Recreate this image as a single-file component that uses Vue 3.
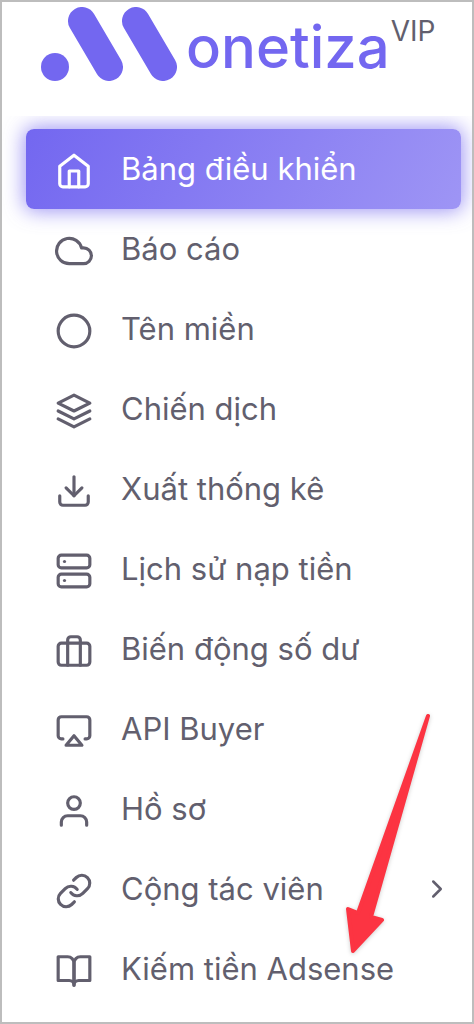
<script setup>
const items = [
  { label: 'Bảng điều khiển', active: true, icon: ['M3 9l9-7 9 7v11a2 2 0 0 1-2 2H5a2 2 0 0 1-2-2z', 'M9 22V12h6v10'] },
  { label: 'Báo cáo', icon: ['M18 10h-1.26A8 8 0 1 0 9 20h9a5 5 0 0 0 0-10z'] },
  { label: 'Tên miền', icon: ['M12 2a10 10 0 1 0 0 20a10 10 0 1 0 0-20z'] },
  { label: 'Chiến dịch', icon: ['M12 2L2 7l10 5 10-5z', 'M2 17l10 5 10-5', 'M2 12l10 5 10-5'] },
  { label: 'Xuất thống kê', icon: ['M21 15v4a2 2 0 0 1-2 2H5a2 2 0 0 1-2-2v-4', 'M7 10l5 5 5-5', 'M12 15V3'] },
  {
    label: 'Lịch sử nạp tiền',
    icon: [
      'M4 2h16a2 2 0 0 1 2 2v4a2 2 0 0 1-2 2H4a2 2 0 0 1-2-2V4a2 2 0 0 1 2-2z',
      'M4 14h16a2 2 0 0 1 2 2v4a2 2 0 0 1-2 2H4a2 2 0 0 1-2-2v-4a2 2 0 0 1 2-2z',
      'M6 6h.01',
      'M6 18h.01',
    ],
  },
  {
    label: 'Biến động số dư',
    icon: [
      'M4 7h16a2 2 0 0 1 2 2v10a2 2 0 0 1-2 2H4a2 2 0 0 1-2-2V9a2 2 0 0 1 2-2z',
      'M16 21V5a2 2 0 0 0-2-2h-4a2 2 0 0 0-2 2v16',
    ],
  },
  { label: 'API Buyer', icon: ['M5 17H4a2 2 0 0 1-2-2V5a2 2 0 0 1 2-2h16a2 2 0 0 1 2 2v10a2 2 0 0 1-2 2h-1', 'M12 15l5 6H7z'] },
  { label: 'Hồ sơ', icon: ['M20 21v-2a4 4 0 0 0-4-4H8a4 4 0 0 0-4 4v2', 'M12 3a4 4 0 1 0 0 8a4 4 0 1 0 0-8z'] },
  {
    label: 'Cộng tác viên',
    expandable: true,
    icon: [
      'M10 13a5 5 0 0 0 7.54.54l3-3a5 5 0 0 0-7.07-7.07l-1.72 1.71',
      'M14 11a5 5 0 0 0-7.54-.54l-3 3a5 5 0 0 0 7.07 7.07l1.71-1.71',
    ],
  },
  { label: 'Kiếm tiền Adsense', icon: ['M2 3h6a4 4 0 0 1 4 4v14a3 3 0 0 0-3-3H2z', 'M22 3h-6a4 4 0 0 0-4 4v14a3 3 0 0 1 3-3h7z'] },
]
</script>

<template>
  <aside class="sidebar">
    <header class="brand">
      <a class="logo" href="#">
        <svg class="mark" viewBox="0 0 136 74" aria-hidden="true">
          <circle cx="14" cy="60" r="14" />
          <path d="M41 14L68 60M95 14L122 60" />
        </svg>
        <span class="name">onetiza</span>
        <span class="tier">VIP</span>
      </a>
    </header>
    <nav class="menu">
      <ul>
        <li v-for="item in items" :key="item.label">
          <a href="#" class="item" :class="{ active: item.active }">
            <svg class="icon" viewBox="0 0 24 24" aria-hidden="true">
              <path v-for="d in item.icon" :key="d" :d="d" />
            </svg>
            <span class="label">{{ item.label }}</span>
            <svg v-if="item.expandable" class="chevron" viewBox="0 0 24 24" aria-hidden="true">
              <path d="M9 18l6-6-6-6" />
            </svg>
          </a>
        </li>
      </ul>
    </nav>
    <svg class="arrow" viewBox="0 0 86 242" aria-hidden="true">
      <path d="M83 4L13 201L3 197L8 239L37 208L26 205Z" />
    </svg>
  </aside>
</template>

<style>
body {
  margin: 0;
  background: #fff;
}
</style>

<style scoped>
.sidebar {
  position: relative;
  box-sizing: border-box;
  min-height: 100vh;
  border: 2px solid #bdbdbd;
  background: #fff;
  color: #625f6e;
  font-family: Inter, "Liberation Sans", sans-serif;
}
.brand {
  box-sizing: border-box;
  height: 114px;
  padding: 5px 0 0 39px;
}
.logo {
  display: flex;
  align-items: flex-start;
  color: inherit;
  text-decoration: none;
}
.mark {
  flex: none;
  width: 136px;
  height: 74px;
}
.mark circle {
  fill: #7367f0;
}
.mark path {
  fill: none;
  stroke: #7367f0;
  stroke-width: 28;
  stroke-linecap: round;
}
.name {
  margin-left: 9px;
  padding-top: 6px;
  color: #7367f0;
  font-size: 58px;
  font-weight: 500;
  line-height: 68px;
}
.tier {
  margin-left: 1px;
  padding-top: 8px;
  font-size: 28px;
  line-height: 32px;
}
.menu {
  overflow: hidden;
  padding: 13px 11px 13px 24px;
}
ul {
  margin: 0;
  padding: 0;
  list-style: none;
}
.item {
  display: flex;
  align-items: center;
  box-sizing: border-box;
  height: 80px;
  padding: 0 9px 2px 29px;
  border-radius: 8px;
  color: inherit;
  font-size: 31px;
  text-decoration: none;
}
.active {
  background: linear-gradient(118deg, #7367f0, #9e95f5);
  box-shadow: 0 0 20px 2px rgba(115, 103, 240, 0.7);
  color: #fff;
}
.icon,
.chevron {
  flex: none;
  fill: none;
  stroke: currentColor;
  stroke-width: 2;
  stroke-linecap: round;
  stroke-linejoin: round;
}
.icon {
  width: 38px;
  height: 38px;
  margin: 6px 28px 0 0;
}
.label {
  flex: 1;
  white-space: nowrap;
}
.chevron {
  width: 30px;
  height: 30px;
  margin-top: 2px;
}
.arrow {
  position: absolute;
  top: 710px;
  right: 41px;
  width: 86px;
  height: 242px;
  filter: drop-shadow(0 1px 2px rgba(0, 0, 0, 0.2));
}
.arrow path {
  fill: #fc3442;
  stroke: #fc3442;
  stroke-width: 4;
  stroke-linejoin: round;
}
</style>
